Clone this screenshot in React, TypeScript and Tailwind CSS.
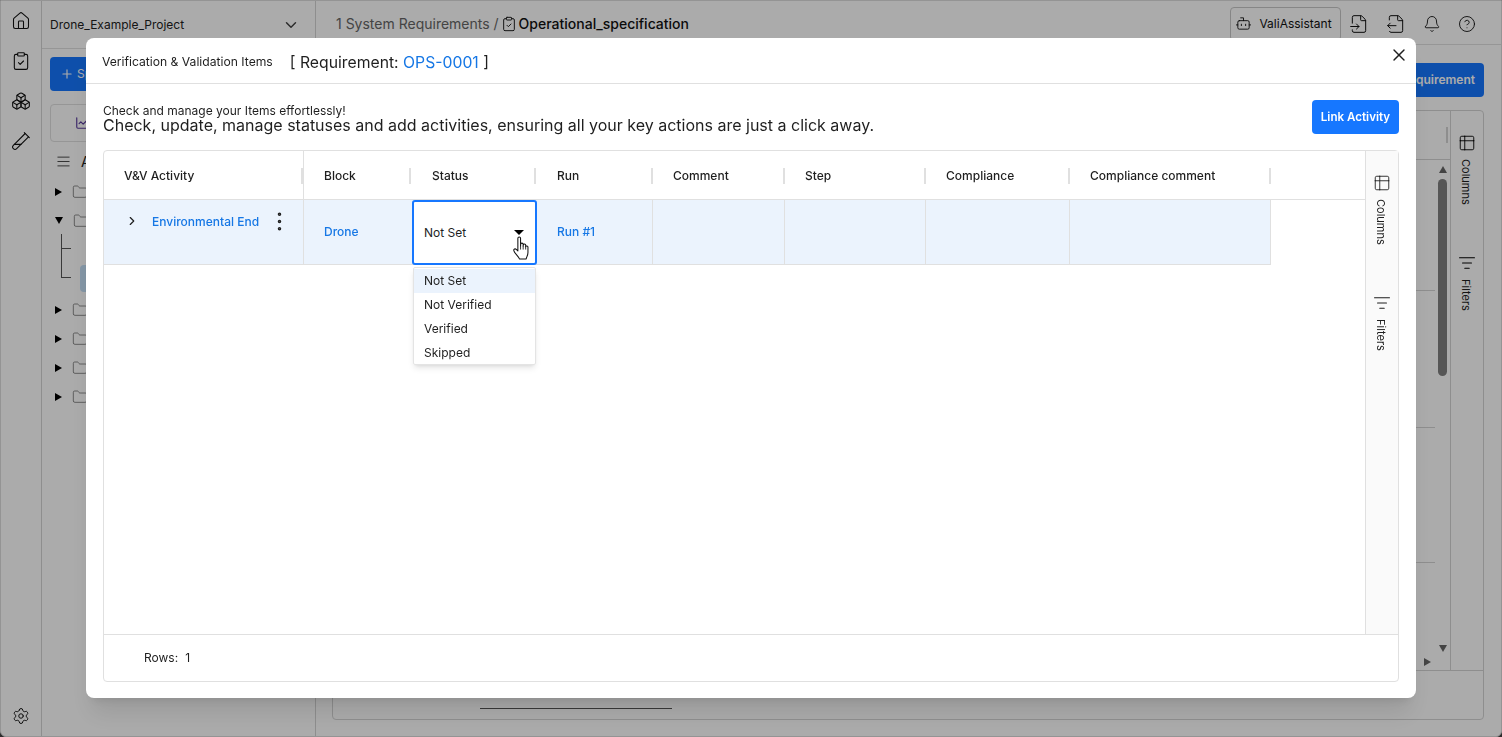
import { AlignJustify, Bell, Bot, Boxes, ChartLine, ChevronDown, ChevronRight, CircleHelp, ClipboardCheck, EllipsisVertical, FileInput, FileOutput, Folder, House, ListFilter, Plus, Settings, Table2, TestTubeDiagonal, X } from "lucide-react"

const columns = [
    { name: "V&V Activity", pad: "pl-5" },
    { name: "Block", pad: "pl-5" },
    { name: "Status", pad: "pl-[21px]" },
    { name: "Run", pad: "pl-[21px]" },
    { name: "Comment", pad: "pl-5" },
    { name: "Step", pad: "pl-5" },
    { name: "Compliance", pad: "pl-5" },
    { name: "Compliance comment", pad: "pl-5" },
]

const statusOptions = ["Not Set", "Not Verified", "Verified", "Skipped"]

function SideTab({ icon, label, gap }: { icon: React.ReactNode; label: string; gap: string }) {
    return (
        <div className={`flex flex-col items-center gap-[7px] ${gap}`}>
            {icon}
            <span className="[writing-mode:vertical-rl] mr-[3px] text-[11px] leading-[13px] text-[#1f1f1f]">{label}</span>
        </div>
    )
}

function TreeRow({ open }: { open?: boolean }) {
    return (
        <div className="flex items-center gap-[10px] h-[29px] pl-[5px]">
            <span className={open ? "w-0 h-0 border-x-[4px] border-x-transparent border-t-[7px] border-t-black" : "w-0 h-0 border-y-[4px] border-y-transparent border-l-[7px] border-l-black"} />
            <Folder size={16} strokeWidth={1} className="text-[#555]" />
        </div>
    )
}

function Background() {
    return (
        <div className="h-[737px] bg-[#444]">
            <div className="h-full flex bg-white overflow-hidden rounded-b-[6px] border border-[#ddd]">
                <div className="w-[41px] shrink-0 border-r border-[#d4d4d4] flex flex-col items-center pt-[10px] gap-[20px]">
                    <House size={20} strokeWidth={1.3} className="text-[#111]" />
                    <ClipboardCheck size={20} strokeWidth={1.3} className="text-[#111]" />
                    <Boxes size={20} strokeWidth={1.3} className="text-[#111]" />
                    <TestTubeDiagonal size={20} strokeWidth={1.3} className="text-[#111]" />
                    <Settings size={18} strokeWidth={1.3} className="text-[#111] mt-auto mb-[11px]" />
                </div>
                <div className="w-[274px] shrink-0 border-r border-[#d4d4d4]">
                    <div className="h-[48px] border-b border-[#e0e0e0] flex items-center justify-between pl-2 pr-[15px] text-[12px] text-[#222]">
                        <span>Drone_Example_Project</span>
                        <ChevronDown size={18} className="text-[#444]" />
                    </div>
                    <div className="px-2 pt-2">
                        <div className="w-[120px] h-[34px] rounded bg-[#1677ff] text-white text-[12px] flex items-center gap-[3px] px-[10px]"><Plus size={14} />Specification</div>
                        <div className="w-[150px] h-[38px] mt-[13px] rounded border border-[#e0e0e0] flex items-center px-6"><ChartLine size={14} className="text-[#5b3d9e]" /></div>
                        <div className="flex items-center gap-[10px] h-[35px] pt-[3px] pl-[6px] text-[14px] text-[#222]"><AlignJustify size={15} strokeWidth={1.3} />All</div>
                        <TreeRow />
                        <TreeRow open />
                        <div className="relative h-[60px]">
                            <div className="absolute left-[11px] -top-px h-[44px] w-[10px] border-l border-b border-[#555]" />
                            <div className="absolute left-[11px] -top-px h-[15px] w-[10px] border-b border-[#555]" />
                            <div className="absolute left-[30px] top-[30px] h-[27px] w-[150px] rounded-sm bg-[#c5e0f8]" />
                        </div>
                        <TreeRow />
                        <TreeRow />
                        <TreeRow />
                        <TreeRow />
                    </div>
                </div>
                <div className="flex-1 min-w-0 flex flex-col">
                    <div className="h-[44px] border-b border-[#e0e0e0] flex items-center pl-5 pr-[25px] pt-[2px] text-[14px]">
                        <span className="text-[#666]">1 System Requirements /</span>
                        <ClipboardCheck size={16} strokeWidth={1.5} className="mx-[2px] text-[#222]" />
                        <span className="text-[#111] font-medium">Operational_specification</span>
                        <div className="ml-auto flex items-center gap-[17px] text-[#111]">
                            <div className="h-[34px] w-[111px] rounded border border-[#c8c8c8] flex items-center justify-center gap-[7px] pr-[4px] text-[12px] -mr-[9px]"><Bot size={17} strokeWidth={1.3} />ValiAssistant</div>
                            <FileInput size={20} strokeWidth={1.2} />
                            <FileOutput size={20} strokeWidth={1.2} />
                            <Bell size={18} strokeWidth={1.2} />
                            <CircleHelp size={18} strokeWidth={1.2} />
                        </div>
                    </div>
                    <div className="flex-1 min-h-0 pt-[18px] pr-[17px] pl-[16px] pb-[16px] flex flex-col">
                        <div className="self-end w-[140px] h-[34px] rounded bg-[#1677ff] text-white text-[12px] font-semibold flex items-center justify-end pr-[9px]">Add Requirement</div>
                        <div className="mt-[13px] flex-1 min-h-0 rounded border border-[#d4d4d4] flex flex-col">
                            <div className="flex-1 min-h-0 flex justify-end border-b border-[#d4d4d4]">
                                <div className="w-[35px] flex flex-col">
                                    <div className="h-[49px] border-b border-[#d4d4d4] shrink-0 flex items-center justify-end pr-[2px]">
                                        <span className="w-[2px] h-4 bg-[#d4d4d4]" />
                                    </div>
                                    <div className="flex-1 min-h-0 flex">
                                        <div className="w-[20px] flex flex-col">
                                            <div className="h-[131px] border-b border-[#d4d4d4]" />
                                            <div className="h-[137px] border-b border-[#d4d4d4]" />
                                            <div className="h-[135px] border-b border-[#d4d4d4]" />
                                            <span className="mt-auto mb-[4px] ml-[9px] w-0 h-0 border-y-[4px] border-y-transparent border-l-[7px] border-l-[#666]" />
                                        </div>
                                        <div className="w-[15px] flex flex-col items-center">
                                            <span className="mt-[6px] w-0 h-0 border-x-[4.5px] border-x-transparent border-b-[7px] border-b-[#666]" />
                                            <div className="mt-[6px] w-[9px] h-[197px] rounded-full bg-[#808080]" />
                                            <span className="mt-auto mb-[18px] w-0 h-0 border-x-[4.5px] border-x-transparent border-t-[7px] border-t-[#666]" />
                                        </div>
                                    </div>
                                </div>
                                <div className="w-[33px] border-l border-[#d4d4d4] flex flex-col items-center pt-[23px]">
                                    <SideTab gap="" icon={<Table2 size={18} strokeWidth={1.2} />} label="Columns" />
                                    <SideTab gap="mt-[49px]" icon={<ListFilter size={18} strokeWidth={1.4} />} label="Filters" />
                                </div>
                            </div>
                            <div className="h-[48px] pl-[147px] pt-[37px]">
                                <div className="w-[192px] h-px bg-[#555]" />
                            </div>
                        </div>
                    </div>
                </div>
            </div>
        </div>
    )
}

function StatusCell() {
    return (
        <div className="relative h-full">
            <div className="h-[65px] w-[125px] ml-px rounded-[3px] border-2 border-[#1677ff] bg-white flex items-center justify-between pl-[10px] pr-[11px]">
                <span>Not Set</span>
                <span className="w-0 h-0 border-x-[5px] border-x-transparent border-t-[5px] border-t-black" />
            </div>
            <div className="absolute left-[2px] top-[67px] w-[123px] h-[98px] overflow-hidden rounded-[2px] bg-white border border-[#e4e4e4] shadow-md z-10 pt-px">
                {statusOptions.map((opt, i) => (
                    <div key={opt} className={`h-6 pl-[10px] flex items-center ${i === 0 ? "bg-[#ebf3fd]" : ""}`}>{opt}</div>
                ))}
            </div>
            <svg className="absolute left-[101px] top-[36px] z-20" width="19" height="25" viewBox="0 0 17 24">
                <path d="M5 2.2c0-1.6 2.6-1.6 2.6 0v7.3l.1-1.6c0-1.4 2.4-1.4 2.4 0v1.8l.1-1.1c.1-1.3 2.3-1.2 2.3.1v1.6c.2-1.1 2.2-1 2.2.3v5.2c0 2.7-1.3 4.2-1.7 6.2H6.5c-.6-2.2-4.8-5.4-5.4-8-.3-1.4 1.3-2.2 2.4-1.1L5 14.400z" fill="#fff" stroke="#111" strokeWidth="1" strokeLinejoin="round" />
                <path d="M7.600 9.500v3.500M10.100 9.500v3.500M12.500 10v3" fill="none" stroke="#111" strokeWidth=".8" />
            </svg>
        </div>
    )
}

function LinkItemsModal() {
    return (
        <div className="fixed inset-0 bg-black/[.33] z-40">
            <div className="absolute left-[86px] top-[38px] w-[1330px] h-[660px] bg-white rounded-lg shadow-xl flex flex-col">
                <div className="h-[46px] shrink-0 border-b border-[#e0e0e0] flex items-center pl-4 pt-[2px] relative">
                    <span className="mt-[2px] text-[12.150px] text-[#1f1f1f]">Verification &amp; Validation Items</span>
                    <span className="ml-[17px] mt-[2px] text-[15.750px] text-[#1f1f1f]">[ Requirement: <span className="text-[#1677e5]">OPS-0001</span> ]</span>
                    <X size={20} strokeWidth={1.7} className="absolute right-[7px] top-[7px] text-[#1f1f1f]" />
                </div>
                <div className="flex-1 min-h-0 px-[17px] pt-4 pb-4 flex flex-col">
                    <div className="flex items-start justify-between h-[50px] shrink-0">
                        <div className="pt-1 text-[#1f1f1f]">
                            <p className="text-[12px] leading-[13px]">Check and manage your Items effortlessly!</p>
                            <p className="text-[16px] leading-[16px]">Check, update, manage statuses and add activities, ensuring all your key actions are just a click away.</p>
                        </div>
                        <button className="w-[87px] h-[34px] pt-[2px] rounded bg-[#1677ff] text-white text-[11.600px] font-semibold">Link Activity</button>
                    </div>
                    <div className="flex-1 min-h-0 rounded border border-[#e0e0e0] flex flex-col text-[12px] text-[#1f1f1f]">
                        <div className="flex-1 min-h-0 flex">
                            <div className="flex-1 min-w-0">
                                <div className="h-[49px] border-b border-[#e0e0e0] grid grid-cols-[200px_107px_125px_117px_132px_141px_144px_201px] font-medium pt-[2px]">
                                    {columns.map((col, i) => (
                                        <div key={col.name} className={`flex items-center justify-between ${col.pad} ${i === 0 ? "border-r border-[#e0e0e0] -mt-[2px] pt-[2px]" : ""}`}>
                                            <span>{col.name}</span>
                                            <span className="w-[2px] h-4 bg-[#e0e0e0]" />
                                        </div>
                                    ))}
                                </div>
                                <div className="h-[65px] w-[1167px] border-b border-[#e0e0e0] bg-[#ebf3fd] grid grid-cols-[200px_107px_125px_117px_132px_141px_144px_201px]">
                                    <div className="border-r border-[#e0e0e0] flex items-start pt-[13px] pl-[21px]">
                                        <ChevronRight size={14} strokeWidth={2} className="mt-px text-[#1f1f1f]" />
                                        <span className="ml-[13px] font-medium text-[#1677e5]">Environmental End</span>
                                        <EllipsisVertical size={25} strokeWidth={1.4} className="ml-2 -mt-[4px] text-[#1f1f1f]" />
                                    </div>
                                    <div className="flex items-center pl-5 pb-[2px] font-medium text-[#1677e5]">Drone</div>
                                    <StatusCell />
                                    <div className="flex items-center pl-[21px] pb-[2px] font-medium text-[#1677e5] border-r border-[#e0e0e0]">Run #1</div>
                                    <div className="border-r border-[#e0e0e0]" />
                                    <div className="border-r border-[#e0e0e0]" />
                                    <div className="border-r border-[#e0e0e0]" />
                                    <div className="border-r border-[#e0e0e0]" />
                                </div>
                            </div>
                            <div className="w-[33px] shrink-0 border-l border-[#e0e0e0] bg-[#fafafa] flex flex-col items-center pt-[23px]">
                                <SideTab gap="" icon={<Table2 size={18} strokeWidth={1.2} />} label="Columns" />
                                <SideTab gap="mt-[49px]" icon={<ListFilter size={18} strokeWidth={1.4} />} label="Filters" />
                            </div>
                        </div>
                        <div className="h-[47px] shrink-0 border-t border-[#e0e0e0] flex items-center pl-10 gap-[7px]">
                            <span>Rows:</span>
                            <span>1</span>
                        </div>
                    </div>
                </div>
            </div>
        </div>
    )
}

export default function App() {
    return (
        <div className="font-['Inter',sans-serif]">
            <Background />
            <LinkItemsModal />
        </div>
    )
}
